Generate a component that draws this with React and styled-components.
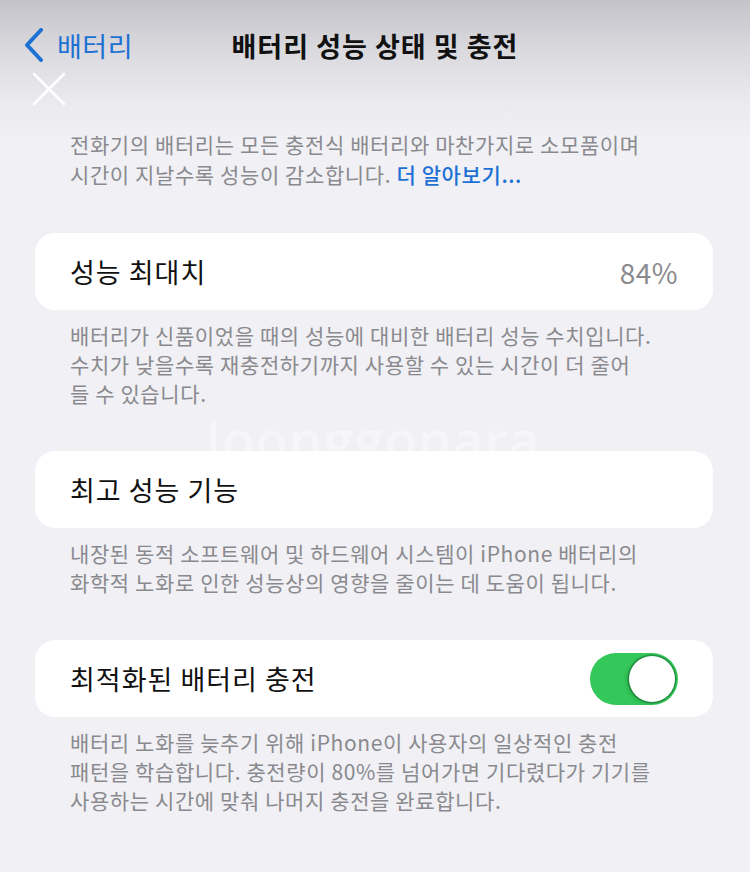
import React from "react";
import styled, { createGlobalStyle } from "styled-components";

const Global = createGlobalStyle`
  html, body {
    margin: 0;
    padding: 0;
    background: #f0f0f5;
  }
  body {
    font-family: "Noto Sans CJK KR", "Noto Sans", sans-serif;
    -webkit-font-smoothing: antialiased;
  }
`;

const Screen = styled.div`
  position: relative;
  width: 750px;
  min-height: 872px;
  box-sizing: border-box;
  padding-top: 20px;
  background: linear-gradient(
    to bottom,
    #c4c3c9 0px,
    #d9d9de 50px,
    #e9e9ee 100px,
    #f0f0f5 140px,
    #f0f0f5 100%
  );
  overflow: hidden;
`;

const NavBar = styled.div`
  display: grid;
  grid-template-columns: 1fr auto 1fr;
  align-items: center;
  height: 50px;
`;

const BackButton = styled.div`
  display: flex;
  align-items: center;
  gap: 13px;
  padding-left: 24px;
  color: #1d71d4;
  font-size: 27px;
  letter-spacing: 0.5px;
  line-height: 1;
`;

const Title = styled.div`
  font-size: 27px;
  font-weight: 700;
  color: #111;
  letter-spacing: 1px;
`;

const CloseRow = styled.div`
  height: 36px;
  padding-left: 32px;
  display: flex;
  align-items: flex-start;
  padding-top: 2px;
`;

const Intro = styled.p`
  margin: 21px 0 44px;
  padding: 0 20px 0 70px;
  font-size: 21px;
  line-height: 30px;
  color: #8a8a8e;
  letter-spacing: 0.6px;
`;

const Line = styled.span`
  display: block;
  white-space: nowrap;
`;

const Link = styled.span`
  color: #1d71d4;
  font-weight: 500;
`;

const Section = styled.section`
  display: flex;
  flex-direction: column;
  gap: 11px;
  margin-bottom: 43px;
`;

const Card = styled.div`
  margin: 0 37px 0 35px;
  height: 77px;
  border-radius: 20px;
  background: #ffffff;
  display: flex;
  align-items: center;
  justify-content: space-between;
  padding: 0 35px;
`;

const Label = styled.span`
  font-size: 27px;
  color: #111;
  letter-spacing: 1px;
`;

const Value = styled.span`
  font-size: 28px;
  font-weight: 400;
  color: #8a8a8e;
  letter-spacing: 0.5px;
`;

const Footer = styled.p`
  margin: 0;
  padding: 0 20px 0 70px;
  font-size: 21px;
  line-height: 29px;
  color: #8a8a8e;
  letter-spacing: 0.6px;
`;

const Switch = styled.div`
  position: relative;
  width: 88px;
  height: 52px;
  border-radius: 26px;
  background: ${(p) => (p.$on ? "#34c759" : "#e5e5ea")};
  flex-shrink: 0;
`;

const Knob = styled.div`
  position: absolute;
  top: 3px;
  ${(p) => (p.$on ? "right: 3px;" : "left: 3px;")}
  width: 46px;
  height: 46px;
  border-radius: 50%;
  background: #fff;
  box-shadow: 0 0 0 1.5px rgba(20, 110, 50, 0.55), -2px 1px 4px rgba(0, 0, 0, 0.18);
`;

const Watermark = styled.div`
  position: absolute;
  left: 205px;
  top: 402px;
  font-family: "Open Sans", "Noto Sans", sans-serif;
  font-size: 54px;
  font-weight: 600;
  letter-spacing: 0.5px;
  color: rgba(255, 255, 255, 0.38);
  pointer-events: none;
`;

const Chevron = () => (
  <svg width="20" height="34" viewBox="0 0 20 34" fill="none">
    <path
      d="M17 2 L3 17 L17 32"
      stroke="#1d71d4"
      strokeWidth="4"
      strokeLinecap="round"
      strokeLinejoin="round"
    />
  </svg>
);

const CloseIcon = () => (
  <svg width="34" height="34" viewBox="0 0 34 34" fill="none">
    <path
      d="M2 2 L32 32 M32 2 L2 32"
      stroke="#ffffff"
      strokeWidth="2.6"
      strokeLinecap="round"
    />
  </svg>
);

const settings = [
  {
    label: "성능 최대치",
    value: "84%",
    footer: [
      "배터리가 신품이었을 때의 성능에 대비한 배터리 성능 수치입니다.",
      "수치가 낮을수록 재충전하기까지 사용할 수 있는 시간이 더 줄어",
      "들 수 있습니다.",
    ],
  },
  {
    label: "최고 성능 기능",
    footer: [
      "내장된 동적 소프트웨어 및 하드웨어 시스템이 iPhone 배터리의",
      "화학적 노화로 인한 성능상의 영향을 줄이는 데 도움이 됩니다.",
    ],
  },
  {
    label: "최적화된 배터리 충전",
    toggle: true,
    footer: [
      "배터리 노화를 늦추기 위해 iPhone이 사용자의 일상적인 충전",
      "패턴을 학습합니다. 충전량이 80%를 넘어가면 기다렸다가 기기를",
      "사용하는 시간에 맞춰 나머지 충전을 완료합니다.",
    ],
  },
];

export default function App() {
  return (
    <>
      <Global />
      <Screen>
        <NavBar>
          <BackButton>
            <Chevron />
            <span>배터리</span>
          </BackButton>
          <Title>배터리 성능 상태 및 충전</Title>
          <div />
        </NavBar>
        <CloseRow>
          <CloseIcon />
        </CloseRow>
        <Intro>
          <Line>전화기의 배터리는 모든 충전식 배터리와 마찬가지로 소모품이며</Line>
          <Line>
            시간이 지날수록 성능이 감소합니다. <Link>더 알아보기...</Link>
          </Line>
        </Intro>
        {settings.map((s) => (
          <Section key={s.label}>
            <Card>
              <Label>{s.label}</Label>
              {s.value && <Value>{s.value}</Value>}
              {s.toggle && (
                <Switch $on>
                  <Knob $on />
                </Switch>
              )}
            </Card>
            <Footer>
              {s.footer.map((l) => (
                <Line key={l}>{l}</Line>
              ))}
            </Footer>
          </Section>
        ))}
        <Watermark>Joonggonara</Watermark>
      </Screen>
    </>
  );
}
